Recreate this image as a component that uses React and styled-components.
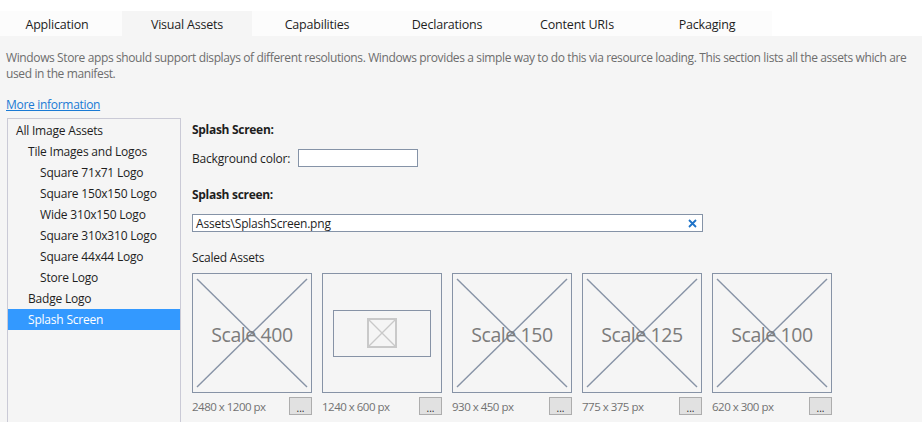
import React from "react";
import styled, { createGlobalStyle } from "styled-components";

const Global = createGlobalStyle`
  html, body { margin: 0; padding: 0; }
  body {
    background: #f5f5f5;
    font-family: "Open Sans", "Noto Sans", sans-serif;
    font-size: 12px;
    color: #1e1e1e;
    overflow: hidden;
  }
`;

const Page = styled.div`
  width: 922px;
  height: 422px;
  overflow: hidden;
  background: #f5f5f5;
`;

const TabStrip = styled.div`
  display: flex;
  background: #ffffff;
  padding-top: 11px;
  height: 25px;
  margin-left: -8px;
`;

const Tab = styled.div`
  width: 130px;
  height: 25px;
  padding-top: 2px;
  box-sizing: border-box;
  display: flex;
  align-items: center;
  justify-content: center;
  font-size: 12.5px;
  letter-spacing: -0.2px;
  color: #1e1e1e;
  background: ${(p) => (p.$active ? "#f5f5f5" : "#fcfcfc")};
`;

const Body = styled.div`
  padding: 14px 6px 0 6px;
`;

const DescLine = styled.div`
  font-size: 12px;
  line-height: 16px;
  color: #6d6d6d;
  letter-spacing: -0.38px;
  white-space: nowrap;
`;

const Link = styled.a`
  display: block;
  width: fit-content;
  margin-top: 15px;
  line-height: 16px;
  color: #1a7ad4;
  text-decoration: underline;
  letter-spacing: -0.3px;
  cursor: pointer;
`;

const Main = styled.div`
  display: flex;
  margin-top: 5px;
  margin-left: 1px;
`;

const Tree = styled.div`
  width: 172px;
  height: 320px;
  border: 1px solid #cacad6;
  padding-top: 1px;
  flex-shrink: 0;
`;

const TreeRow = styled.div`
  height: 21px;
  line-height: 21px;
  padding-left: ${(p) => 8 + p.$level * 12}px;
  background: ${(p) => (p.$selected ? "#3399ff" : "transparent")};
  color: ${(p) => (p.$selected ? "#ffffff" : "#1e1e1e")};
  letter-spacing: -0.2px;
  white-space: nowrap;
`;

const Panel = styled.div`
  margin-left: 11px;
  padding-top: 4px;
  display: flex;
  flex-direction: column;
`;

const Heading = styled.div`
  font-weight: 700;
  line-height: 16px;
  letter-spacing: -0.3px;
  margin-top: ${(p) => p.$top || 0}px;
`;

const FieldRow = styled.div`
  display: flex;
  align-items: center;
  margin-top: 11px;
  gap: 8px;
`;

const Label = styled.span`
  letter-spacing: -0.2px;
`;

const ColorBox = styled.div`
  width: 118px;
  height: 16px;
  background: #ffffff;
  border: 1px solid #8593a7;
`;

const PathInput = styled.div`
  margin-top: 11px;
  height: 16px;
  width: 501px;
  background: #ffffff;
  border: 1px solid #8593a7;
  display: flex;
  align-items: center;
  justify-content: space-between;
  padding: 0 5px 0 3px;
`;

const PathText = styled.span`
  letter-spacing: -0.2px;
  color: #1e1e1e;
`;

const Assets = styled.div`
  display: flex;
  gap: 10px;
  margin-top: 7px;
`;

const SubLabel = styled.div`
  margin-top: 18px;
  line-height: 16px;
  letter-spacing: -0.2px;
`;

const Asset = styled.div`
  width: 120px;
  display: flex;
  flex-direction: column;
`;

const Frame = styled.div`
  width: 118px;
  height: 118px;
  border: 1px solid #8793a6;
  display: grid;
  place-items: center;
  & > * { grid-area: 1 / 1; }
`;

const ScaleText = styled.span`
  font-size: 19.5px;
  color: #7c7c7c;
  letter-spacing: -0.4px;
  margin-top: 2px;
`;

const Inner = styled.div`
  width: 96px;
  height: 45px;
  border: 1px solid #8793a6;
  display: flex;
  align-items: center;
  justify-content: center;
`;

const Footer = styled.div`
  display: flex;
  justify-content: space-between;
  align-items: center;
  margin-top: 4px;
`;

const Size = styled.span`
  color: #727272;
  font-size: 11.5px;
  letter-spacing: -0.5px;
`;

const Dots = styled.button`
  width: 23px;
  height: 18px;
  background: #e1e1e1;
  border: 1px solid #adadad;
  padding: 3px 0 0 0;
  margin: 0;
  font-size: 10px;
  line-height: 10px;
  color: #1e1e1e;
  font-family: inherit;
`;

const ClearIcon = () => (
  <svg width="9" height="9" viewBox="0 0 9 9">
    <path d="M1 1 L8 8 M8 1 L1 8" stroke="#1e73c8" strokeWidth="1.8" />
  </svg>
);

const Cross = () => (
  <svg width="118" height="118" viewBox="0 0 118 118">
    <line x1="4" y1="5" x2="114" y2="113" stroke="#8793a6" strokeWidth="1.4" />
    <line x1="114" y1="5" x2="4" y2="113" stroke="#8793a6" strokeWidth="1.4" />
  </svg>
);

const ImageIcon = () => (
  <svg width="30" height="30" viewBox="0 0 30 30">
    <rect x="1" y="1" width="28" height="28" fill="none" stroke="#c9c9c9" strokeWidth="2" />
    <line x1="2" y1="2" x2="28" y2="28" stroke="#c9c9c9" strokeWidth="1.2" />
    <line x1="28" y1="2" x2="2" y2="28" stroke="#c9c9c9" strokeWidth="1.2" />
  </svg>
);

const tabs = ["Application", "Visual Assets", "Capabilities", "Declarations", "Content URIs", "Packaging"];

const tree = [
  ["All Image Assets", 0],
  ["Tile Images and Logos", 1],
  ["Square 71x71 Logo", 2],
  ["Square 150x150 Logo", 2],
  ["Wide 310x150 Logo", 2],
  ["Square 310x310 Logo", 2],
  ["Square 44x44 Logo", 2],
  ["Store Logo", 2],
  ["Badge Logo", 1],
  ["Splash Screen", 1],
];

const assets = [
  { label: "Scale 400", size: "2480 x 1200 px" },
  { label: null, size: "1240 x 600 px" },
  { label: "Scale 150", size: "930 x 450 px" },
  { label: "Scale 125", size: "775 x 375 px" },
  { label: "Scale 100", size: "620 x 300 px" },
];

export default function App() {
  return (
    <Page>
      <Global />
      <TabStrip>
        {tabs.map((t) => (
          <Tab key={t} $active={t === "Visual Assets"}>{t}</Tab>
        ))}
      </TabStrip>
      <Body>
        <DescLine>
          Windows Store apps should support displays of different resolutions. Windows provides a simple way to do this via resource loading. This section lists all the assets which are
        </DescLine>
        <DescLine>used in the manifest.</DescLine>
        <Link>More information</Link>
        <Main>
          <Tree>
            {tree.map(([name, level]) => (
              <TreeRow key={name} $level={level} $selected={name === "Splash Screen"}>
                {name}
              </TreeRow>
            ))}
          </Tree>
          <Panel>
            <Heading>Splash Screen:</Heading>
            <FieldRow>
              <Label>Background color:</Label>
              <ColorBox />
            </FieldRow>
            <Heading $top={20}>Splash screen:</Heading>
            <PathInput>
              <PathText>Assets\SplashScreen.png</PathText>
              <ClearIcon />
            </PathInput>
            <SubLabel>Scaled Assets</SubLabel>
            <Assets>
              {assets.map((a) => (
                <Asset key={a.size}>
                  <Frame>
                    {a.label ? (
                      <>
                        <Cross />
                        <ScaleText>{a.label}</ScaleText>
                      </>
                    ) : (
                      <Inner>
                        <ImageIcon />
                      </Inner>
                    )}
                  </Frame>
                  <Footer>
                    <Size>{a.size}</Size>
                    <Dots>...</Dots>
                  </Footer>
                </Asset>
              ))}
            </Assets>
          </Panel>
        </Main>
      </Body>
    </Page>
  );
}
